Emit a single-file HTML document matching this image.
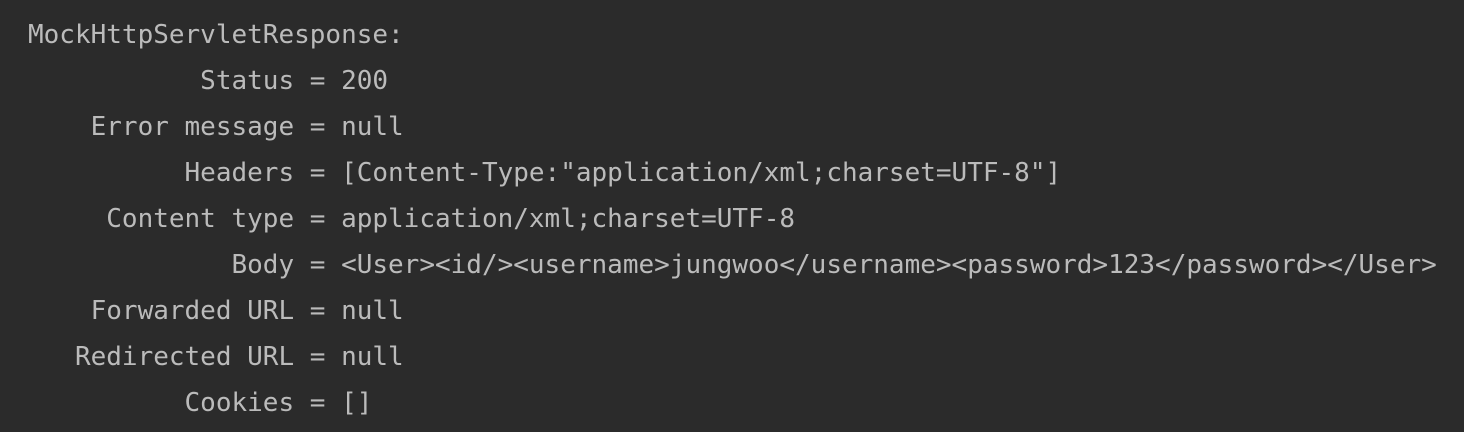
<!DOCTYPE html>
<html><head><style>
html,body{margin:0;padding:0;background:#2b2b2b;width:1464px;height:432px;overflow:hidden}
pre{margin:0;position:absolute;left:28px;top:12px;font-family:"DejaVu Sans Mono","Liberation Mono",monospace;font-size:26px;line-height:46px;color:#bbbbbb;letter-spacing:0}
</style></head><body>
<pre>MockHttpServletResponse:
           Status = 200
    Error message = null
          Headers = [Content-Type:"application/xml;charset=UTF-8"]
     Content type = application/xml;charset=UTF-8
             Body = &lt;User&gt;&lt;id/&gt;&lt;username&gt;jungwoo&lt;/username&gt;&lt;password&gt;123&lt;/password&gt;&lt;/User&gt;
    Forwarded URL = null
   Redirected URL = null
          Cookies = []</pre>
</body></html>
